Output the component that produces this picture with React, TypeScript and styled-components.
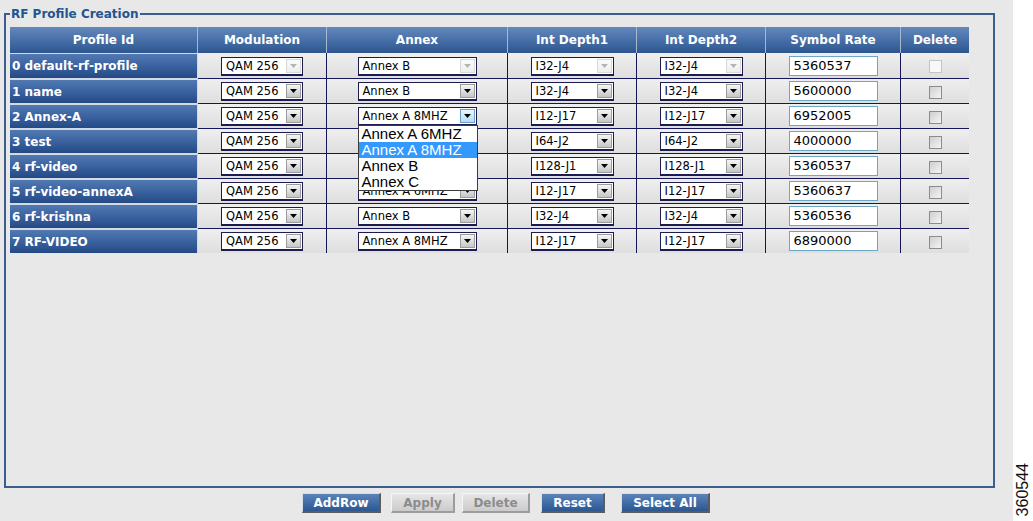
import React from 'react';
import styled, { createGlobalStyle, css } from 'styled-components';

const GlobalStyle = createGlobalStyle`
  html, body {
    margin: 0;
    padding: 0;
    background: #ffffff;
  }
  body {
    font-family: "DejaVu Sans", Verdana, sans-serif;
  }
`;

interface IRow {
  name: string;
  modulation: string;
  annex: string;
  depth1: string;
  depth2: string;
  rate: string;
}

const rows: IRow[] = [
  { name: '0 default-rf-profile', modulation: 'QAM 256', annex: 'Annex B', depth1: 'I32-J4', depth2: 'I32-J4', rate: '5360537' },
  { name: '1 name', modulation: 'QAM 256', annex: 'Annex B', depth1: 'I32-J4', depth2: 'I32-J4', rate: '5600000' },
  { name: '2 Annex-A', modulation: 'QAM 256', annex: 'Annex A 8MHZ', depth1: 'I12-J17', depth2: 'I12-J17', rate: '6952005' },
  { name: '3 test', modulation: 'QAM 256', annex: 'Annex B', depth1: 'I64-J2', depth2: 'I64-J2', rate: '4000000' },
  { name: '4 rf-video', modulation: 'QAM 256', annex: 'Annex B', depth1: 'I128-J1', depth2: 'I128-J1', rate: '5360537' },
  { name: '5 rf-video-annexA', modulation: 'QAM 256', annex: 'Annex A 6MHZ', depth1: 'I12-J17', depth2: 'I12-J17', rate: '5360637' },
  { name: '6 rf-krishna', modulation: 'QAM 256', annex: 'Annex B', depth1: 'I32-J4', depth2: 'I32-J4', rate: '5360536' },
  { name: '7 RF-VIDEO', modulation: 'QAM 256', annex: 'Annex A 8MHZ', depth1: 'I12-J17', depth2: 'I12-J17', rate: '6890000' },
];

const annexOptions = ['Annex A 6MHZ', 'Annex A 8MHZ', 'Annex B', 'Annex C'];

const columns = [
  { title: 'Profile Id', width: 188 },
  { title: 'Modulation', width: 129 },
  { title: 'Annex', width: 181 },
  { title: 'Int Depth1', width: 129 },
  { title: 'Int Depth2', width: 129 },
  { title: 'Symbol Rate', width: 135 },
  { title: 'Delete', width: 68 },
];

const buttons = [
  { label: 'AddRow', width: 79, offset: 0 },
  { label: 'Apply', width: 64, offset: 10, disabled: true },
  { label: 'Delete', width: 68, offset: 7, disabled: true },
  { label: 'Reset', width: 64, offset: 11 },
  { label: 'Select All', width: 89, offset: 16 },
];

const Arrow: React.FC<{ color: string }> = ({ color }) => (
  <svg width="7" height="4" viewBox="0 0 7 4">
    <path d="M0 0 H7 L3.5 4 Z" fill={color} />
  </svg>
);

const DropSelect: React.FC<{
  value: string;
  width: number;
  disabled?: boolean;
  open?: boolean;
  options?: string[];
}> = ({ value, width, disabled, open, options }) => (
  <SelectBox $width={width}>
    <SelectText>{value}</SelectText>
    <ArrowButton $state={disabled ? 'disabled' : open ? 'active' : 'normal'}>
      <Arrow color={disabled ? '#b4b4b4' : '#000000'} />
    </ArrowButton>
    {open && options && (
      <OptionList>
        {options.map((opt) => (
          <OptionItem key={opt} $selected={opt === value}>
            {opt}
          </OptionItem>
        ))}
      </OptionList>
    )}
  </SelectBox>
);

const App: React.FC = () => {
  return (
    <>
      <GlobalStyle />
      <Page>
        <Canvas>
          <Frame>
            <Legend>RF Profile Creation</Legend>
            <Grid>
              <colgroup>
                {columns.map((c) => (
                  <col key={c.title} style={{ width: c.width }} />
                ))}
              </colgroup>
              <thead>
                <tr>
                  {columns.map((c) => (
                    <HeadCell key={c.title}>{c.title}</HeadCell>
                  ))}
                </tr>
              </thead>
              <tbody>
                {rows.map((r, i) => (
                  <tr key={r.name}>
                    <NameCell $first={i === 0}>{r.name}</NameCell>
                    <Cell $first={i === 0}>
                      <DropSelect value={r.modulation} width={82} disabled={i === 0} />
                    </Cell>
                    <Cell $first={i === 0}>
                      <DropSelect
                        value={r.annex}
                        width={119}
                        disabled={i === 0}
                        open={i === 2}
                        options={annexOptions}
                      />
                    </Cell>
                    <Cell $first={i === 0}>
                      <DropSelect value={r.depth1} width={83} disabled={i === 0} />
                    </Cell>
                    <Cell $first={i === 0}>
                      <DropSelect value={r.depth2} width={83} disabled={i === 0} />
                    </Cell>
                    <Cell $first={i === 0}>
                      <RateInput>{r.rate}</RateInput>
                    </Cell>
                    <Cell $first={i === 0} $last>
                      <CheckBox $disabled={i === 0} />
                    </Cell>
                  </tr>
                ))}
              </tbody>
            </Grid>
          </Frame>
          <ButtonBar>
            {buttons.map((b) => (
              <ActionButton
                key={b.label}
                $width={b.width}
                $offset={b.offset}
                $disabled={b.disabled}
              >
                {b.label}
              </ActionButton>
            ))}
          </ButtonBar>
        </Canvas>
        <Side>
          <Stamp>360544</Stamp>
        </Side>
      </Page>
    </>
  );
};

export default App;

const Page = styled.div`
  display: flex;
  width: 1033px;
  height: 521px;
  overflow: hidden;
`;

const Canvas = styled.div`
  width: 1013px;
  flex-shrink: 0;
  background: #e8e8e8;
  box-sizing: border-box;
  padding: 7px 0 0 4px;
  display: flex;
  flex-direction: column;
`;

const Side = styled.div`
  flex: 1;
  background: #ffffff;
  display: flex;
  align-items: flex-end;
  justify-content: center;
  padding-bottom: 5px;
`;

const Stamp = styled.span`
  writing-mode: vertical-rl;
  transform: rotate(180deg);
  font-family: "Liberation Sans", Arial, sans-serif;
  font-size: 16px;
  color: #111;
  line-height: 1;
`;

const Frame = styled.fieldset`
  margin: 0;
  width: 991px;
  height: 481px;
  box-sizing: border-box;
  border: 2px solid #3b5e8e;
  padding: 6px 4px 0 4px;
  min-inline-size: 0;
`;

const Legend = styled.legend`
  padding: 0 1px;
  margin-left: 0;
  font-weight: bold;
  font-size: 12px;
  line-height: 14px;
  color: #23558f;
`;

const Grid = styled.table`
  border-collapse: separate;
  border-spacing: 0;
  table-layout: fixed;
  width: 959px;
`;

const HeadCell = styled.th`
  height: 26px;
  padding: 0;
  box-sizing: border-box;
  background: linear-gradient(#6388bc 0%, #4a72aa 45%, #2d558f 100%);
  color: #ffffff;
  font-size: 12px;
  font-weight: bold;
  text-align: center;
  vertical-align: middle;
  border-right: 1px solid #a6b7cf;

  &:last-child {
    border-right: none;
  }
`;

const NameCell = styled.td<{ $first?: boolean }>`
  height: 25px;
  padding: 0 0 0 2px;
  box-sizing: border-box;
  background: linear-gradient(#5279b1 0%, #3a62a0 50%, #244a84 100%);
  color: #ffffff;
  font-size: 12px;
  font-weight: bold;
  white-space: nowrap;
  overflow: hidden;
  border-right: 1px solid #d4dae3;
  ${({ $first }) =>
    $first
      ? css`
          border-top: 1px solid #d4dae3;
        `
      : css`
          border-top: 2px solid #d4dae3;
        `}
`;

const Cell = styled.td<{ $first?: boolean; $last?: boolean }>`
  height: 25px;
  padding: 0;
  box-sizing: border-box;
  background: linear-gradient(#efefef, #dedede);
  text-align: center;
  vertical-align: middle;
  border-right: ${({ $last }) => ($last ? 'none' : '1px solid #15155a')};
  border-top: ${({ $first }) => ($first ? 'none' : '1px solid #15155a')};
`;

const SelectBox = styled.div<{ $width: number }>`
  position: relative;
  display: inline-flex;
  align-items: center;
  justify-content: space-between;
  width: ${({ $width }) => $width}px;
  height: 19px;
  box-sizing: border-box;
  background: #ffffff;
  border: 1px solid #1c1c4e;
  border-bottom-width: 2px;
  vertical-align: middle;
  text-align: left;
`;

const SelectText = styled.span`
  padding-left: 4px;
  font-size: 11.5px;
  color: #000;
  white-space: nowrap;
  line-height: 16px;
`;

const arrowStates = {
  normal: css`
    background: linear-gradient(#f6f6f6, #c6c6c6);
    border-color: #9c9c9c;
  `,
  disabled: css`
    background: linear-gradient(#fbfbfb, #eeeeee);
    border-color: #d8d8d8;
  `,
  active: css`
    background: linear-gradient(#eaf6fd, #b4dcf6);
    border-color: #6c9ec8;
  `,
};

const ArrowButton = styled.span<{ $state: keyof typeof arrowStates }>`
  display: flex;
  align-items: center;
  justify-content: center;
  width: 15px;
  height: 14px;
  margin-right: 1px;
  box-sizing: border-box;
  border: 1px solid;
  ${({ $state }) => arrowStates[$state]}
`;

const OptionList = styled.div`
  position: absolute;
  left: -1px;
  top: calc(100% + 1px);
  width: 120px;
  box-sizing: border-box;
  background: #ffffff;
  border: 1px solid #3c3c3c;
  z-index: 5;
`;

const OptionItem = styled.div<{ $selected?: boolean }>`
  height: 16px;
  line-height: 16px;
  padding-left: 3px;
  font-family: "Liberation Sans", Arial, sans-serif;
  font-size: 15px;
  white-space: nowrap;
  color: ${({ $selected }) => ($selected ? '#ffffff' : '#000000')};
  background: ${({ $selected }) => ($selected ? '#3399ff' : 'transparent')};
`;

const RateInput = styled.div`
  display: inline-block;
  width: 89px;
  height: 20px;
  box-sizing: border-box;
  background: #ffffff;
  border: 1px solid #6ca8c6;
  padding-left: 4px;
  font-size: 13px;
  line-height: 18px;
  text-align: left;
  color: #000;
  vertical-align: middle;
`;

const CheckBox = styled.span<{ $disabled?: boolean }>`
  display: inline-block;
  width: 13px;
  height: 13px;
  box-sizing: border-box;
  vertical-align: middle;
  border: 1px solid ${({ $disabled }) => ($disabled ? '#c4c4c4' : '#8c8c8c')};
  background: ${({ $disabled }) =>
    $disabled ? '#f8f8f8' : 'linear-gradient(135deg, #cfcfcf, #f4f4f4)'};
`;

const ButtonBar = styled.div`
  display: flex;
  margin-top: 5px;
  padding-left: 298px;
`;

const ActionButton = styled.button<{ $width: number; $offset: number; $disabled?: boolean }>`
  width: ${({ $width }) => $width}px;
  height: 20px;
  margin-left: ${({ $offset }) => $offset}px;
  padding: 0;
  box-sizing: border-box;
  font-family: "DejaVu Sans", Verdana, sans-serif;
  font-size: 12px;
  font-weight: bold;
  border-style: solid;
  border-width: 1px 2px 2px 1px;
  ${({ $disabled }) =>
    $disabled
      ? css`
          color: #8c8c8c;
          background: linear-gradient(#e6e6e6, #cbcbcb);
          border-color: #f6f6f6 #9c9c9c #9c9c9c #f6f6f6;
        `
      : css`
          color: #ffffff;
          background: linear-gradient(#5a83ba, #2c5791);
          border-color: #d6dfea #5c5c5c #5c5c5c #d6dfea;
        `}
`;
